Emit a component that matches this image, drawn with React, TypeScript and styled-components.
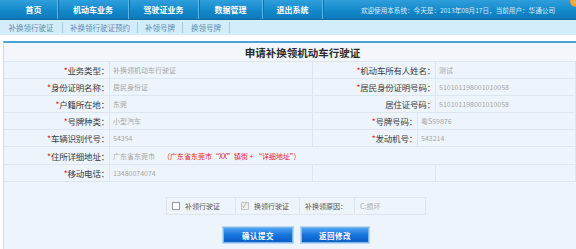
import React from "react";
import styled, { createGlobalStyle } from "styled-components";

const GlobalStyle = createGlobalStyle`
  html, body {
    margin: 0;
    padding: 0;
    background: #ffffff;
    overflow: hidden;
  }
  body {
    font-family: "Microsoft YaHei", "Noto Sans CJK SC", "Noto Sans", sans-serif;
  }
`;

type Field = { label: string; value: string; required?: boolean };

const navItems: { text: string; w: number; pl?: number }[] = [
  { text: "首页", w: 58, pl: 10 },
  { text: "机动车业务", w: 71 },
  { text: "驾驶证业务", w: 70 },
  { text: "数据管理", w: 64 },
  { text: "退出系统", w: 60 },
];

const subItems = [
  { text: "补换领行驶证", w: 63 },
  { text: "补换领行驶证预约", w: 75 },
  { text: "补领号牌", w: 45 },
  { text: "换领号牌", w: 47 },
];

const groupA: [Field, Field][] = [
  [
    { label: "业务类型", value: "补换领机动车行驶证", required: true },
    { label: "机动车所有人姓名", value: "测试", required: true },
  ],
  [
    { label: "身份证明名称", value: "居民身份证", required: true },
    { label: "居民身份证明号码", value: "510101198001010058", required: true },
  ],
  [
    { label: "户籍所在地", value: "东莞", required: true },
    { label: "居住证号码", value: "510101198001010058" },
  ],
];

const groupB: [Field, Field][] = [
  [
    { label: "号牌种类", value: "小型汽车", required: true },
    { label: "号牌号码", value: "粤S59876", required: true },
  ],
  [
    { label: "车辆识别代号", value: "54354", required: true },
    { label: "发动机号", value: "543214", required: true },
  ],
];

const Label: React.FC<{ f: Field }> = ({ f }) => (
  <LabelCell>
    {f.required && <Star>*</Star>}
    {f.label}：
  </LabelCell>
);

const App: React.FC = () => {
  return (
    <>
      <GlobalStyle />
      <Page>
        <TopNav>
          {navItems.map((n) => (
            <NavItem key={n.text} $w={n.w} $pl={n.pl ?? 0}>
              {n.text}
            </NavItem>
          ))}
          <Welcome>欢迎使用本系统：今天是：2013年08月17日，当前用户：华通公司</Welcome>
          <Badge />
        </TopNav>

        <SubNav>
          {subItems.map((s) => (
            <SubItem key={s.text} $w={s.w}>
              {s.text}
            </SubItem>
          ))}
        </SubNav>

        <Panel>
          <Title>申请补换领机动车行驶证</Title>

          {groupA.map(([a, b]) => (
            <Row key={a.label} $third={123}>
              <Label f={a} />
              <ValueCell>{a.value}</ValueCell>
              <Label f={b} />
              <ValueCell>{b.value}</ValueCell>
            </Row>
          ))}

          {groupB.map(([a, b]) => (
            <Row key={a.label} $third={105}>
              <Label f={a} />
              <ValueCell>{a.value}</ValueCell>
              <Label f={b} />
              <ValueCell>{b.value}</ValueCell>
            </Row>
          ))}

          <WideRow>
            <Label f={{ label: "住所详细地址", value: "", required: true }} />
            <ValueCell>
              广东省东莞市
              <Note>（广东省东莞市“XX”镇街 + “详细地址”）</Note>
            </ValueCell>
          </WideRow>

          <Row $third={123}>
            <Label f={{ label: "移动电话", value: "", required: true }} />
            <ValueCell>13480074074</ValueCell>
            <EmptyCell />
            <EmptyCell />
          </Row>

          <Bottom>
            <Options>
              <OptCell $w={69}>
                <Box />
                补领行驶证
              </OptCell>
              <OptCell $w={64}>
                <Box $checked />
                换领行驶证
              </OptCell>
              <OptCell $w={55}>补换领原因：</OptCell>
              <OptCell $w={70} $muted>
                C:损坏
              </OptCell>
            </Options>
            <Buttons>
              <Button $w={70}>确认提交</Button>
              <Button $w={68}>返回修改</Button>
            </Buttons>
          </Bottom>
        </Panel>
      </Page>
    </>
  );
};

const Page = styled.div`
  width: 576px;
  height: 249px;
  display: flex;
  flex-direction: column;
`;

const TopNav = styled.div`
  position: relative;
  height: 20px;
  display: flex;
  align-items: stretch;
  background: linear-gradient(#2f9fdc, #1287c9 60%, #0e79b8);
  border-bottom: 1px solid #0b6aa3;
  box-sizing: border-box;
  overflow: hidden;
`;

const NavItem = styled.div<{ $w: number; $pl: number }>`
  width: ${({ $w }) => $w}px;
  flex-shrink: 0;
  padding-left: ${({ $pl }) => $pl}px;
  box-sizing: border-box;
  display: flex;
  align-items: center;
  justify-content: center;
  color: #ffffff;
  font-size: 8px;
  font-weight: bold;
  border-right: 1px solid #5cb6e6;
  box-shadow: 1px 0 0 #0d72ad;
`;

const Welcome = styled.div`
  flex: 1;
  display: flex;
  align-items: center;
  justify-content: flex-end;
  padding-right: 21px;
  color: #d9eefa;
  font-size: 6.6px;
  white-space: nowrap;
`;

const Badge = styled.div`
  position: absolute;
  right: -6px;
  top: -5px;
  width: 12px;
  height: 12px;
  border-radius: 50%;
  background: radial-gradient(circle at 40% 60%, #ffb347, #f07a10);
`;

const SubNav = styled.div`
  height: 15px;
  display: flex;
  background: #d3edfb;
`;

const SubItem = styled.div<{ $w: number }>`
  width: ${({ $w }) => $w}px;
  display: flex;
  align-items: center;
  justify-content: center;
  color: #5b8db3;
  font-size: 7.5px;
  border-right: 1px solid #a8cbe0;
  margin: 2px 0;
  box-sizing: border-box;
`;

const Panel = styled.div`
  flex: 1;
  margin: 6px 0 0 3px;
  border-top: 2px solid #4ba2d9;
  border-left: 1px solid #cdd9e4;
  background: #eef4fb;
  display: flex;
  flex-direction: column;
`;

const Title = styled.div`
  height: 19px;
  display: flex;
  align-items: center;
  justify-content: center;
  padding-left: 25px;
  font-size: 10.5px;
  font-weight: bold;
  color: #2b2b2b;
  background: #f3f7fc;
  border-bottom: 1px solid #dce6f0;
  box-sizing: border-box;
`;

const Row = styled.div<{ $third: number }>`
  display: grid;
  grid-template-columns: 106px 203px ${({ $third }) => $third}px 1fr;
  height: 17px;
`;

const WideRow = styled.div`
  display: grid;
  grid-template-columns: 106px 1fr;
  height: 18px;
`;

const LabelCell = styled.div`
  display: flex;
  align-items: center;
  justify-content: flex-end;
  font-size: 8.5px;
  color: #3a3a3a;
  white-space: nowrap;
  border-right: 1px solid #dce6f0;
  border-bottom: 1px solid #dce6f0;
  letter-spacing: -0.2px;
`;

const Star = styled.span`
  color: #e01818;
`;

const ValueCell = styled.div`
  display: flex;
  align-items: center;
  padding-left: 3px;
  font-size: 7px;
  color: #a6a6a6;
  white-space: nowrap;
  border-right: 1px solid #dce6f0;
  border-bottom: 1px solid #dce6f0;
`;

const EmptyCell = styled.div`
  border-right: 1px solid #dce6f0;
  border-bottom: 1px solid #dce6f0;
`;

const Note = styled.span`
  color: #e41d1d;
  margin-left: 8px;
`;

const Bottom = styled.div`
  display: flex;
  flex-direction: column;
  align-items: center;
  padding: 15px 0 0 12px;
  gap: 12px;
`;

const Options = styled.div`
  display: flex;
  height: 18px;
  border: 1px solid #dde6ef;
  box-sizing: border-box;
`;

const OptCell = styled.div<{ $w: number; $muted?: boolean }>`
  width: ${({ $w }) => $w}px;
  display: flex;
  align-items: center;
  gap: 3px;
  padding-left: 5px;
  box-sizing: border-box;
  font-size: 7px;
  color: ${({ $muted }) => ($muted ? "#a8a8a8" : "#555555")};
  border-right: 1px solid #dde6ef;
  &:last-child {
    border-right: none;
  }
`;

const Box = styled.span<{ $checked?: boolean }>`
  width: 6px;
  height: 6px;
  border: 1px solid ${({ $checked }) => ($checked ? "#c4c4c4" : "#9a9a9a")};
  background: ${({ $checked }) => ($checked ? "#f2f2f2" : "#ffffff")};
  position: relative;
  margin-right: 2px;
  &::after {
    content: "${({ $checked }) => ($checked ? "✓" : "")}";
    position: absolute;
    left: 0;
    top: -3px;
    font-size: 7px;
    color: #a0a0a0;
  }
`;

const Buttons = styled.div`
  display: flex;
  gap: 8px;
`;

const Button = styled.button<{ $w: number }>`
  width: ${({ $w }) => $w}px;
  height: 16px;
  padding: 0;
  border: 1px solid #7fb8ea;
  outline: 1px solid #b9d8f3;
  background: linear-gradient(#4ea4f2, #1674dc 50%, #0b5fca);
  color: #ffffff;
  font-family: inherit;
  font-size: 7.5px;
  font-weight: bold;
  letter-spacing: 0.5px;
  cursor: pointer;
`;

export default App;
